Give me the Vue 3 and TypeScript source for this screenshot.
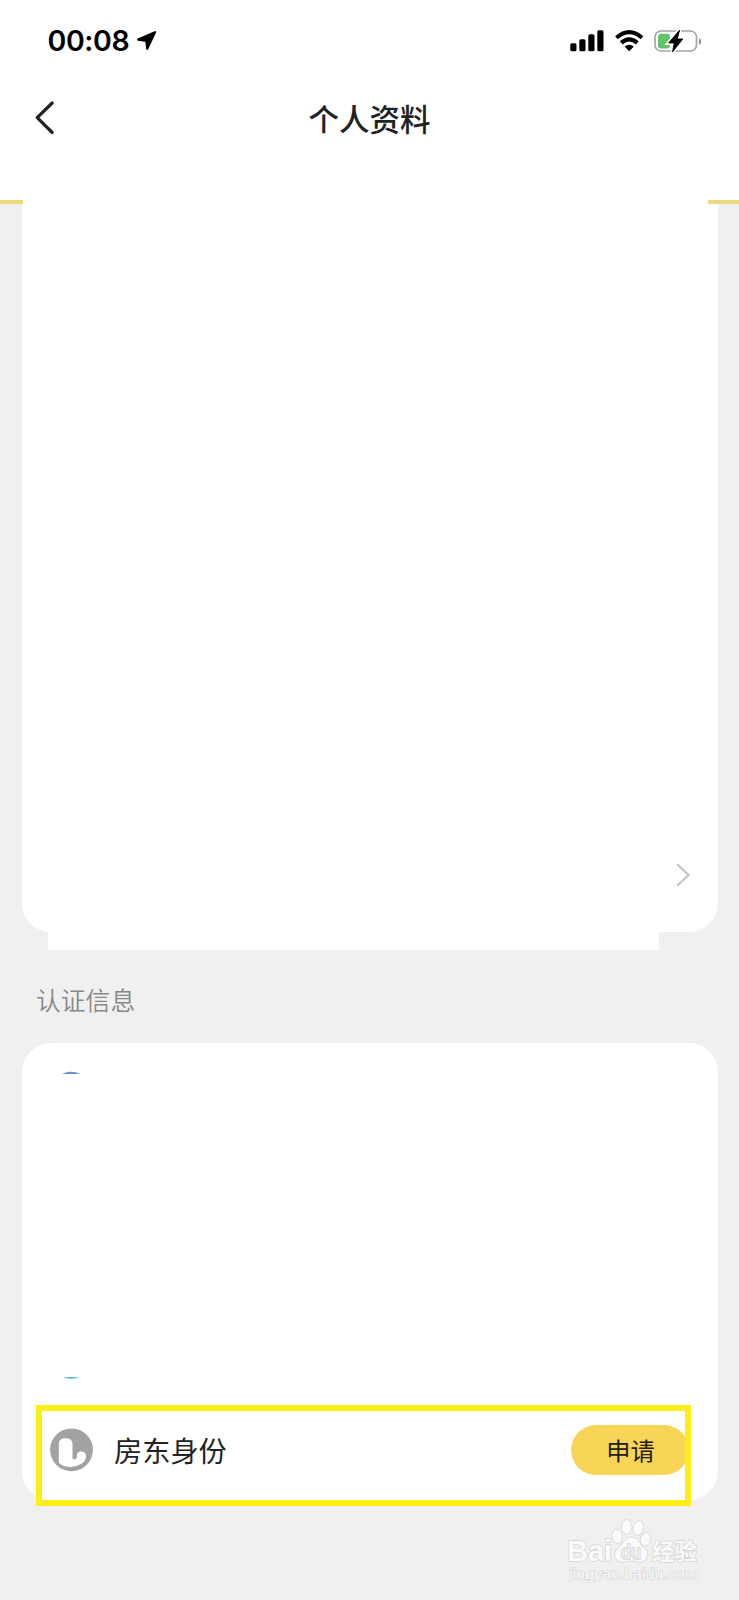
<script setup lang="ts">
const time = '00:08'
const title = '个人资料'
const sectionLabel = '认证信息'
const identity = { name: '房东身份', action: '申请' }
const signalBars = [
  { x: 0, h: 8 },
  { x: 9, h: 12 },
  { x: 18, h: 17 },
  { x: 27, h: 21 },
]
</script>

<template>
  <main class="screen">
    <header class="top">
      <div class="status">
        <span class="time">{{ time }}</span>
        <svg class="location" width="20" height="20" viewBox="0 0 20 20">
          <path d="M18 1.2 L10.2 17.8 L9.4 10 L1.2 8.6 Z" fill="#000" stroke="#000" stroke-width="2.2" stroke-linejoin="round" />
        </svg>
        <svg class="signal" width="34" height="22" viewBox="0 0 34 22">
          <rect v-for="bar in signalBars" :key="bar.x" :x="bar.x + 0.3" :y="21.3 - bar.h" width="6.2" :height="bar.h" rx="1.6" />
        </svg>
        <svg class="wifi" width="29" height="22" viewBox="0 0 29 22">
          <g fill="none" stroke="#000" stroke-width="4.1">
            <path d="M1.5 7.8 Q14.2 -3.5 27 7.8" />
            <path d="M6.2 12.9 Q14.2 5.8 22.3 12.9" />
          </g>
          <path d="M9.6 16.5 Q14.2 13 18.9 16.5 L14.2 21.3 Z" />
        </svg>
        <svg class="battery" width="48" height="24" viewBox="0 0 48 24">
          <rect x="1" y="2" width="41.5" height="20" rx="6" fill="#fff" stroke="#a5a5a5" stroke-width="1.7" />
          <rect x="4" y="4.7" width="12" height="14.8" rx="3" fill="#62c466" />
          <path d="M45 9 Q49.5 12.5 45 16 Z" fill="#888" />
          <path d="M25.5 1.2 L14.7 13.9 H20.3 L18.6 22.8 L28.7 10 H23.2 Z" fill="#fff" stroke="#fff" stroke-width="4" />
          <path d="M25.5 1.2 L14.7 13.9 H20.3 L18.6 22.8 L28.7 10 H23.2 Z" fill="#000" stroke="#000" stroke-width="1" stroke-linejoin="round" />
        </svg>
      </div>
      <nav class="navbar">
        <svg class="back" width="22" height="36" viewBox="0 0 22 36">
          <path d="M18.2 3 L3.2 17.7 L18.2 32.5" fill="none" stroke="#202022" stroke-width="3.2" stroke-linecap="round" stroke-linejoin="round" />
        </svg>
        <h1>{{ title }}</h1>
      </nav>
      <div class="rule"><i class="left"></i><i class="right"></i></div>
    </header>

    <section class="card profile">
      <svg class="chevron" width="15" height="24" viewBox="0 0 15 24">
        <path d="M2 2 L12.5 12 L2 22" fill="none" stroke="#c6c6c6" stroke-width="2.3" stroke-linecap="round" />
      </svg>
    </section>
    <div class="tail"></div>

    <h2>{{ sectionLabel }}</h2>

    <section class="card verify">
      <div class="slot">
        <svg width="20" height="3" viewBox="0 0 20 3"><path d="M1 3 Q10 -1.5 19 3 Z" fill="#6b8ccf" /></svg>
        <svg width="20" height="3" viewBox="0 0 20 3"><path d="M2 0 Q10 4 18 0 Z" fill="#6fbfd6" /></svg>
      </div>
      <div class="row">
        <svg class="badge" width="44" height="44" viewBox="0 0 44 44">
          <circle cx="21.5" cy="21.8" r="21.4" fill="#a2a2a2" />
          <path d="M8.8 16 Q8.8 10.3 15.6 10.3 Q22.5 10.3 22.5 16 V31.3 H24.5 Q27 31.3 27 29 V27 Q27 23.4 31.3 23.4 Q36 23.4 36 28 Q36 33 31 36 Q25.5 39.4 19 39 Q13 38.6 8.8 34.8 Z" fill="#fff" />
        </svg>
        <span class="name">{{ identity.name }}</span>
        <button class="apply" type="button">{{ identity.action }}</button>
      </div>
    </section>

    <svg class="watermark" width="140" height="72" viewBox="0 0 140 72">
      <g class="mark">
        <text x="0" y="46.5" font-size="29" textLength="45" lengthAdjust="spacingAndGlyphs">Bai</text>
        <ellipse cx="50.3" cy="22.5" rx="4.8" ry="6.6" transform="rotate(-12 50.3 22.5)" />
        <ellipse cx="59.7" cy="13" rx="4.8" ry="7" />
        <ellipse cx="71.3" cy="14" rx="4.8" ry="7" transform="rotate(12 71.3 14)" />
        <ellipse cx="78.6" cy="25.3" rx="4.8" ry="6.4" transform="rotate(18 78.6 25.3)" />
        <path d="M64.5 23.5 C71 23.5 72 30 77.5 34.5 C83 39 80.5 47.8 73 47.8 C69 47.8 67 46.6 64 46.6 C61 46.6 59 47.8 55 47.8 C47.5 47.8 45.5 39 51 34.5 C56.5 30 58 23.5 64.5 23.5 Z" />
        <text class="du" x="54" y="44.5" font-size="20" textLength="20" lengthAdjust="spacingAndGlyphs">du</text>
        <text class="cjk" x="85" y="46" font-size="23" textLength="45" lengthAdjust="spacingAndGlyphs">经验</text>
        <text class="url" x="2" y="64.5" font-size="15.5" textLength="129" lengthAdjust="spacingAndGlyphs">jingyan.baidu.com</text>
      </g>
    </svg>
  </main>
</template>

<style>
body {
  margin: 0;
  background: #f0f0f0;
}
</style>

<style scoped>
.screen {
  position: relative;
  width: 739px;
  height: 1600px;
  overflow: hidden;
  background: #f0f0f0;
  color: #222224;
  font-family: "Liberation Sans", "Noto Sans CJK SC", sans-serif;
}
.top {
  height: 203.5px;
  background: #fff;
  display: flex;
  flex-direction: column;
}
.status {
  height: 80px;
  box-sizing: border-box;
  padding: 1px 37px 0 47.5px;
  display: flex;
  align-items: center;
}
.time {
  width: 81.5px;
  padding-top: 1px;
  font: 600 28.5px/32px Inter, sans-serif;
  letter-spacing: -0.4px;
  white-space: nowrap;
  color: #000;
}
.location {
  margin-left: 8px;
}
.signal {
  margin-left: auto;
}
.wifi {
  margin-left: 11px;
}
.battery {
  margin-left: 10px;
}
.navbar {
  height: 76px;
  display: grid;
  grid-template-columns: 100px 1fr 100px;
  align-items: center;
}
.back {
  margin-left: 34px;
}
h1 {
  margin: 0;
  padding-top: 3px;
  text-align: center;
  font-size: 30.5px;
  line-height: 46px;
  font-weight: 500;
}
.rule {
  margin-top: auto;
  height: 4px;
  display: flex;
  justify-content: space-between;
}
.left,
.right {
  width: 23px;
  background: #f0d87c;
}
.right {
  width: 31px;
}
.card {
  margin: 0 21px 0 21.5px;
  background: #fff;
  box-sizing: border-box;
}
.profile {
  height: 728.5px;
  border-radius: 0 0 29px 29px;
  display: flex;
  justify-content: flex-end;
  align-items: flex-end;
  padding: 0 27px 45px 0;
}
.tail {
  width: 611px;
  height: 18px;
  margin-left: 48px;
  background: #fff;
}
h2 {
  margin: 0;
  height: 93px;
  padding: 33px 0 0 36px;
  box-sizing: border-box;
  font-size: 24.8px;
  line-height: 38px;
  font-weight: 350;
  color: #888;
}
.verify {
  height: 457px;
  border-radius: 29px;
  padding: 28px 0 0 14.5px;
}
.slot {
  height: 309px;
  padding-left: 25px;
  display: flex;
  flex-direction: column;
  justify-content: space-between;
}
.row {
  width: 655px;
  height: 101px;
  box-sizing: border-box;
  margin-top: 25px;
  padding: 0 0 11px 8px;
  border: 6px solid #fbf016;
  display: flex;
  align-items: center;
}
.badge {
  flex: none;
}
.name {
  margin-left: 20px;
  padding-top: 3px;
  font-size: 28.2px;
  line-height: 42px;
}
.apply {
  width: 118px;
  height: 50px;
  margin: 0 -4px 0 auto;
  padding: 3px 0 0 1px;
  border: 0;
  border-radius: 25px;
  background: #f8d557;
  clip-path: inset(0 4px 0 0);
  color: #222018;
  font: 400 24.2px/47px "Liberation Sans", "Noto Sans CJK SC", sans-serif;
}
.watermark {
  position: absolute;
  left: 567px;
  top: 1514px;
}
.mark {
  fill: #fafafa;
  stroke: #d4d4d4;
  stroke-width: 1.4;
  paint-order: stroke;
  font-family: "Liberation Sans", sans-serif;
  font-weight: 700;
}
.mark .du {
  fill: #ececec;
  stroke: #cfcfcf;
}
.mark .cjk {
  font-family: "Noto Sans CJK SC", sans-serif;
}
.mark .url {
  font-weight: 400;
  stroke-width: 1.2;
}
</style>
